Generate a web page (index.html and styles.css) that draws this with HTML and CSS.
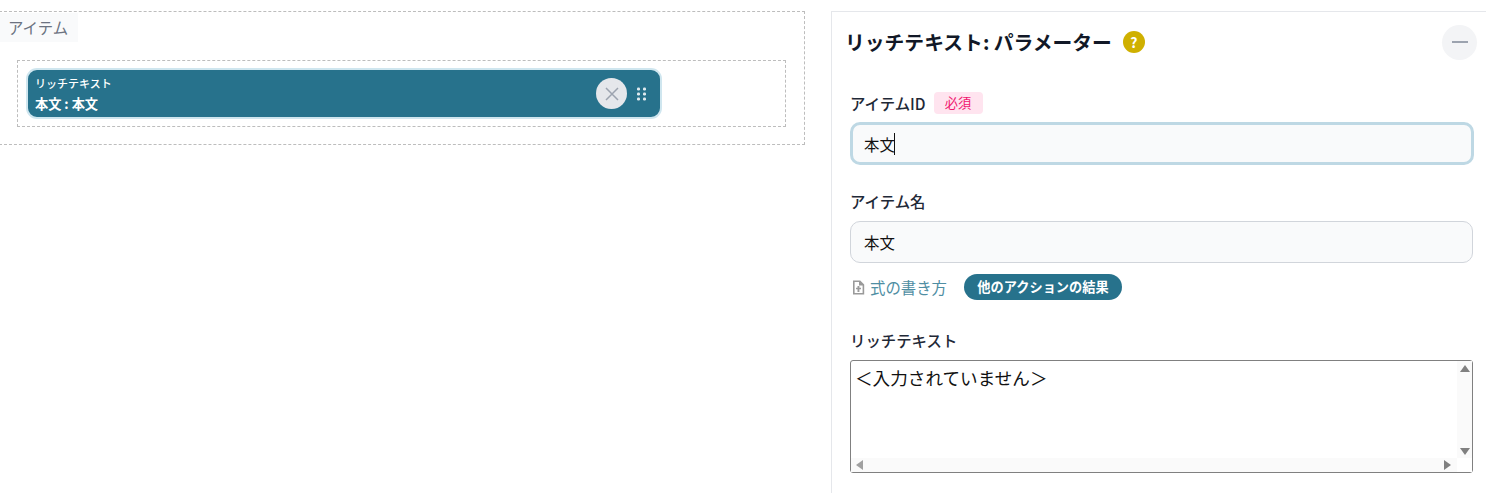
FILE: index.html
```html
<!DOCTYPE html>
<html lang="ja">
<head>
<meta charset="utf-8">
<title>リッチテキスト: パラメーター</title>
<link rel="stylesheet" href="styles.css">
</head>
<body>
<div class="page">
  <section class="canvas">
    <div class="group">
      <div class="group-label">アイテム</div>
      <div class="drop">
        <div class="chip">
          <div class="chip-text">
            <div class="chip-type">リッチテキスト</div>
            <div class="chip-name">本文 : 本文</div>
          </div>
          <button class="chip-close" type="button" aria-label="削除">
            <svg width="14" height="14" viewBox="0 0 14 14"><path d="M1 1L13 13M13 1L1 13" stroke="#9ca3af" stroke-width="1.5" fill="none"/></svg>
          </button>
          <svg class="chip-grip" width="9" height="14" viewBox="0 0 9 14"><g fill="#dfe9ee"><rect x="0" y="0.5" width="3" height="3" rx="1.2"/><rect x="6" y="0.5" width="3" height="3" rx="1.2"/><rect x="0" y="5.5" width="3" height="3" rx="1.2"/><rect x="6" y="5.5" width="3" height="3" rx="1.2"/><rect x="0" y="10.5" width="3" height="3" rx="1.2"/><rect x="6" y="10.5" width="3" height="3" rx="1.2"/></g></svg>
        </div>
      </div>
    </div>
  </section>
  <aside class="panel">
    <header class="panel-head">
      <h2 class="panel-title">リッチテキスト: パラメーター</h2>
      <span class="help">?</span>
      <button class="collapse" type="button" aria-label="閉じる"><span class="collapse-bar"></span></button>
    </header>
    <div class="field field-id">
      <div class="label-row"><label class="label">アイテムID</label><span class="required">必須</span></div>
      <div class="input input-focus"><span>本文</span><span class="caret"></span></div>
    </div>
    <div class="field field-name">
      <div class="label-row"><label class="label">アイテム名</label></div>
      <div class="input"><span>本文</span></div>
      <div class="tools">
        <a class="doc-link">
          <svg width="13" height="15" viewBox="0 0 13 15"><path fill-rule="evenodd" d="M1 0.5h7.2l4 4v10h-11.2zM2.6 2.1v10.8h8V5.6H7V2.1zM5.5 6h1.9v1.7h1.6v1.6H7.4v2.8H5.5V9.3H4V7.7h1.5z" fill="#9a9a9a"/></svg>
          <span>式の書き方</span>
        </a>
        <span class="pill">他のアクションの結果</span>
      </div>
    </div>
    <div class="field field-rich">
      <div class="label-row"><label class="label">リッチテキスト</label></div>
      <div class="textbox">
        <div class="textbox-text">＜入力されていません＞</div>
        <div class="vbar"><span class="arrow-up"></span><span class="arrow-down"></span></div>
        <div class="hbar"><span class="arrow-left"></span><span class="arrow-right"></span></div>
        <div class="corner"></div>
      </div>
    </div>
  </aside>
</div>
</body>
</html>
```

FILE: styles.css
```css
* { box-sizing: border-box; }
html, body { margin: 0; padding: 0; height: 100%; overflow: hidden; background: #fff; }
body { font-family: "Noto Sans CJK JP", "Noto Sans", sans-serif; color: #111827; }
.page { display: flex; height: 493px; padding-top: 11px; align-items: flex-start; }

.canvas { width: 805px; flex: none; margin-right: 26px; }
.group { height: 134px; margin-left: -1px; border: 1px dashed #bdbdbd; padding-top: 1px; }
.group-label { width: 78px; height: 29px; padding-left: 8px; background: #f9fafb; color: #6b7280; font-size: 15.4px; line-height: 29px; }
.drop { margin: 18px 18px 0 17px; height: 67px; border: 1px dashed #bdbdbd; padding: 7px 8px; }
.chip { width: 636px; height: 51px; display: flex; align-items: center; border: 2px solid #cfe6ef; border-radius: 11px; background: #27728c; padding: 0 14px 0 7px; color: #fff; }
.chip-text { flex: 1; }
.chip-type { font-size: 11px; font-weight: 500; line-height: 16px; }
.chip-name { font-size: 13.2px; font-weight: 700; line-height: 19px; margin-top: 3px; }
.chip-close { width: 31px; height: 31px; border: 0; padding: 0; border-radius: 50%; background: #e5e7eb; display: flex; align-items: center; justify-content: center; margin-right: 10px; }
.chip-grip { display: block; }

.panel { flex: 1; height: 482px; border-top: 1px solid #e5e7eb; border-left: 1px solid #e5e7eb; padding: 0 12px 0 18px; }
.panel-head { display: flex; align-items: center; height: 60px; margin-left: -5px; }
.panel-title { margin: 0; font-size: 19.8px; font-weight: 700; line-height: 28px; color: #111827; }
.help { width: 22px; height: 22px; margin-left: 11px; border-radius: 50%; background: #cfb000; color: #fff; font-size: 14px; font-weight: 700; line-height: 22px; text-align: center; }
.collapse { width: 35px; height: 35px; margin-left: auto; margin-right: -3px; border: 0; padding: 0; border-radius: 50%; background: #f3f4f6; display: flex; align-items: center; justify-content: center; }
.collapse-bar { width: 16px; height: 2px; background: #9ca3af; }

.field { width: 624px; }
.field-id { margin-top: 20px; }
.field-name { margin-top: 25px; }
.field-rich { margin-top: 29px; }
.label-row { display: flex; align-items: center; height: 22px; }
.label { font-size: 15.4px; font-weight: 500; color: #1f2937; line-height: 22px; }
.required { margin-left: 8px; width: 49px; height: 22px; border-radius: 4px; background: #ffe4ef; color: #f0186f; font-size: 13.2px; line-height: 22px; text-align: center; }
.input { height: 42px; margin-top: 9px; width: 623px; border: 1px solid #d1d5db; border-radius: 10px; background: #f9fafb; padding-left: 13px; display: flex; align-items: center; font-size: 15.4px; color: #111; }
.input-focus { width: 624px; height: 43px; margin-top: 8px; border: 3px solid #bed8e4; padding-left: 11px; }
.caret { width: 1px; height: 22px; margin-left: -1px; background: #111; }

.tools { display: flex; align-items: center; height: 26px; margin-top: 11px; padding-left: 2px; }
.doc-link { display: flex; align-items: center; gap: 5px; color: #4f8ea3; font-size: 15.4px; }
.doc-link svg { display: block; }
.pill { margin-left: 17px; width: 158px; height: 26px; border-radius: 13px; background: #27728c; color: #fff; font-size: 13.2px; font-weight: 700; line-height: 26px; text-align: center; }

.textbox { margin-top: 9px; width: 623px; height: 113px; border: 1px solid #808080; border-radius: 3px; display: grid; grid-template-columns: 1fr 15px; grid-template-rows: 1fr 14px; background: #fff; }
.textbox-text { padding: 5px 0 0 4px; font-size: 17.6px; line-height: 24px; color: #111; }
.vbar { background: #fafafa; display: flex; flex-direction: column; justify-content: space-between; align-items: center; padding: 4px 0 0; }
.hbar { background: #fafafa; display: flex; justify-content: space-between; align-items: center; padding: 0 6px 0 5px; }
.corner { background: #fff; }
.arrow-up { width: 0; height: 0; border-left: 5px solid transparent; border-right: 5px solid transparent; border-bottom: 7px solid #808080; }
.arrow-down { width: 0; height: 0; border-left: 5px solid transparent; border-right: 5px solid transparent; border-top: 7px solid #808080; margin-bottom: 3px; }
.arrow-left { width: 0; height: 0; border-top: 5px solid transparent; border-bottom: 5px solid transparent; border-right: 7px solid #a0a0a0; }
.arrow-right { width: 0; height: 0; border-top: 5px solid transparent; border-bottom: 5px solid transparent; border-left: 7px solid #808080; }
```
